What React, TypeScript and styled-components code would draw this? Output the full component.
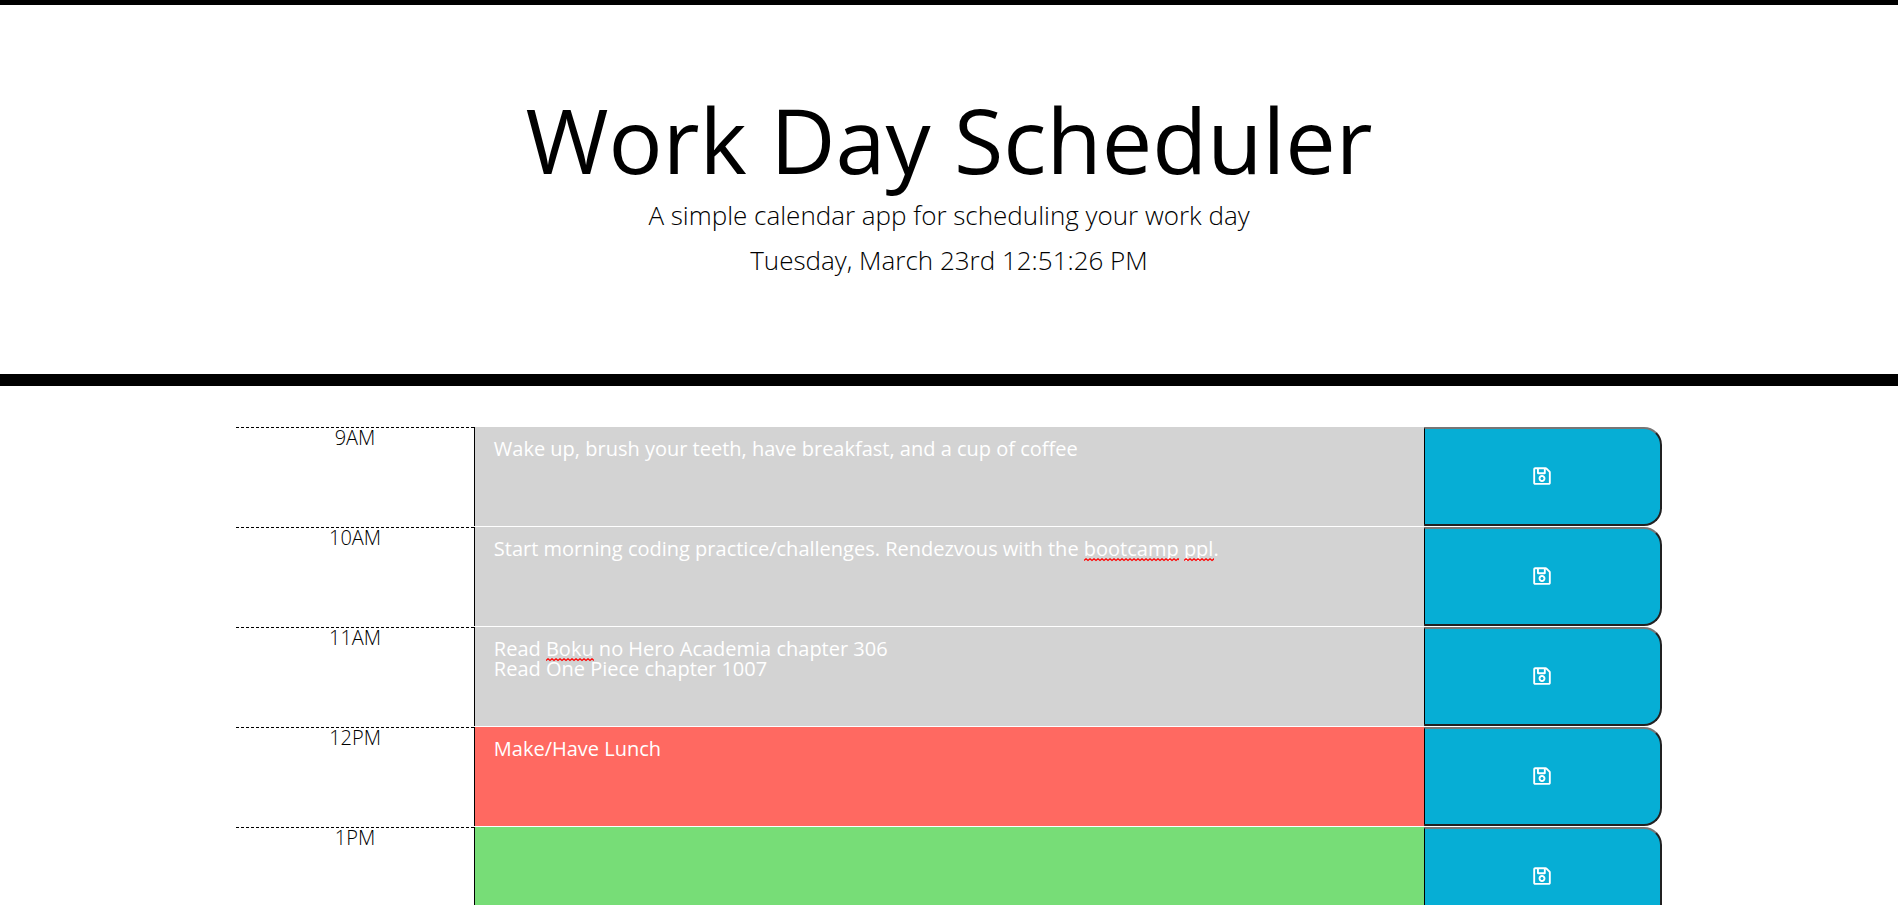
import React from "react";
import styled, { createGlobalStyle } from "styled-components";
import { FaRegSave } from "react-icons/fa";

const GlobalStyle = createGlobalStyle`
  *, *::before, *::after { box-sizing: border-box; }
  body {
    margin: 0;
    background: #fff;
    color: #000;
    font-family: "Open Sans", sans-serif;
    font-size: 20px;
    line-height: 20px;
  }
`;

const Header = styled.header`
  padding: 76px 24px 87px;
  border-top: 5px solid #000;
  border-bottom: 12px solid #000;
  text-align: center;
`;

const Title = styled.h1`
  margin: 0;
  font-size: 90px;
  font-weight: 400;
  line-height: 116px;
`;

const Lead = styled.p`
  margin: 0 0 9px;
  font-size: 26px;
  font-weight: 300;
  line-height: 36px;
`;

const Schedule = styled.main`
  width: calc(75% + 2px);
  margin: 41px auto;
  display: flex;
  flex-direction: column;
  gap: 1px;
`;

const TimeBlock = styled.section`
  display: grid;
  grid-template-columns: 1fr 4fr 1fr;
  min-height: 99px;
`;

const Hour = styled.label`
  border-top: 1px dashed #000;
  text-align: center;
  font-weight: 300;
`;

const Entry = styled.div`
  position: relative;
  display: flex;
  border-left: 1px solid #000;
`;

type Phase = "past" | "present" | "future";

const phaseColors: Record<Phase, string> = {
  past: "#d3d3d3",
  present: "#ff6961",
  future: "#77dd77",
};

const Description = styled.textarea<{ $phase: Phase }>`
  flex: 1;
  min-width: 0;
  margin: 0;
  padding: 12px 19px;
  border: 0;
  border-radius: 0;
  outline: 0;
  resize: none;
  overflow: hidden;
  background: ${({ $phase }) => phaseColors[$phase]};
  color: #fff;
  font: inherit;
`;

const Squiggle = styled.svg<{ $left: number }>`
  position: absolute;
  top: 31px;
  left: ${({ $left }) => $left}px;
  pointer-events: none;
`;

const SaveButton = styled.button`
  display: flex;
  align-items: center;
  justify-content: center;
  padding: 0 0 2px;
  border: 2px solid #212121;
  border-top-color: #767676;
  border-left: 1px solid #000;
  border-radius: 0 18px 18px 0;
  background: #06aed5;
  color: #fff;
  font-size: 20px;
  cursor: pointer;
`;

type Mark = { left: number; width: number };
type Block = { hour: string; phase: Phase; text: string; marks?: Mark[] };

const blocks: Block[] = [
  { hour: "9AM", phase: "past", text: "Wake up, brush your teeth, have breakfast, and a cup of coffee" },
  {
    hour: "10AM",
    phase: "past",
    text: "Start morning coding practice/challenges. Rendezvous with the bootcamp ppl.",
    marks: [{ left: 609, width: 95 }, { left: 709, width: 30 }],
  },
  {
    hour: "11AM",
    phase: "past",
    text: "Read Boku no Hero Academia chapter 306\nRead One Piece chapter 1007",
    marks: [{ left: 71, width: 48 }],
  },
  { hour: "12PM", phase: "present", text: "Make/Have Lunch" },
  { hour: "1PM", phase: "future", text: "" },
  { hour: "2PM", phase: "future", text: "" },
  { hour: "3PM", phase: "future", text: "" },
  { hour: "4PM", phase: "future", text: "" },
  { hour: "5PM", phase: "future", text: "" },
];

function SpellingMark({ left, width }: Mark) {
  let d = "M0 2.5";
  for (let x = 0; x < width; x += 4) d += ` L${x + 2} 0.8 L${x + 4} 2.5`;
  return (
    <Squiggle $left={left} width={width} height="4" aria-hidden="true">
      <path d={d} fill="none" stroke="#f00" strokeWidth="1.3" />
    </Squiggle>
  );
}

export default function App() {
  return (
    <>
      <GlobalStyle />
      <Header>
        <Title>Work Day Scheduler</Title>
        <Lead>A simple calendar app for scheduling your work day</Lead>
        <Lead>Tuesday, March 23rd 12:51:26 PM</Lead>
      </Header>
      <Schedule>
        {blocks.map(({ hour, phase, text, marks = [] }) => (
          <TimeBlock key={hour}>
            <Hour htmlFor={`entry-${hour}`}>{hour}</Hour>
            <Entry>
              <Description id={`entry-${hour}`} $phase={phase} defaultValue={text} />
              {marks.map((mark) => (
                <SpellingMark key={mark.left} {...mark} />
              ))}
            </Entry>
            <SaveButton type="button" aria-label={`Save ${hour}`}>
              <FaRegSave aria-hidden="true" />
            </SaveButton>
          </TimeBlock>
        ))}
      </Schedule>
    </>
  );
}
